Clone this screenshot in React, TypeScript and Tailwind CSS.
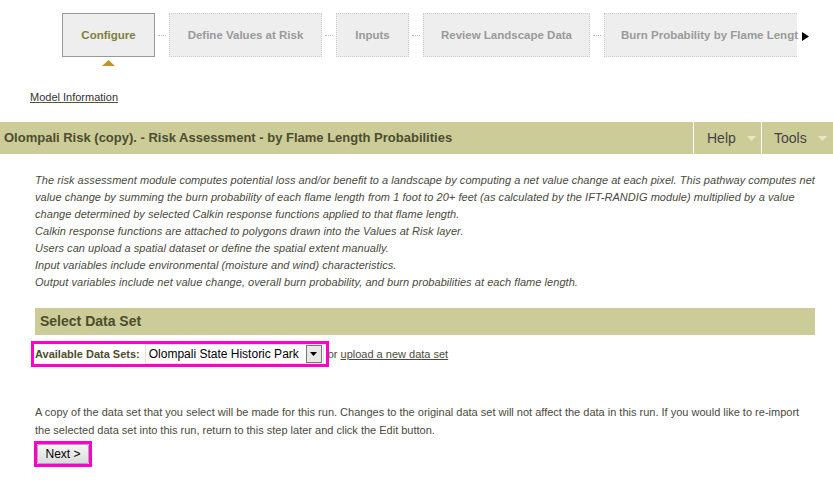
const steps = [
  { label: 'Define Values at Risk', w: 'w-[153px]' },
  { label: 'Inputs', w: 'w-[73px]' },
  { label: 'Review Landscape Data', w: 'w-[167px]' },
];

function Connector() {
  return <div className="w-[14px] flex justify-center"><div className="w-[8px] border-t border-dotted border-[#bbb]" /></div>;
}

export default function App() {
  return (
    <div className="w-[833px] h-[480px] overflow-hidden bg-white font-['Liberation_Sans',Arial,sans-serif] text-[11px] text-[#444]">
      {/* wizard steps */}
      <div className="flex items-center pl-[62px] pt-[13px]">
        <div className="w-[93px] h-[44px] pt-[2px] flex items-center justify-center border border-[#999] bg-[#eeeeee] font-bold text-[11.5px] text-[#7f7f3c]">
          Configure
        </div>
        {steps.map((s) => (
          <div key={s.label} className="flex items-center">
            <Connector />
            <div className={`${s.w} h-[44px] pt-[2px] flex items-center justify-center border border-dotted border-[#ccc] bg-[#eeeeee] font-bold text-[11.5px] text-[#9a9a9a] whitespace-nowrap`}>
              {s.label}
            </div>
          </div>
        ))}
        <Connector />
        <div className="w-[193px] h-[44px] pt-[2px] flex items-center pl-[16px] border border-dotted border-r-0 border-[#ccc] bg-[#eeeeee] font-bold text-[11.5px] text-[#9a9a9a] whitespace-nowrap">
          Burn Probability by Flame Lengt
        </div>
        <svg width="7" height="9" viewBox="0 0 7 9" className="ml-[5px] mt-[2px]">
          <path d="M0 0 L7 4.5 L0 9 Z" fill="#000" />
        </svg>
      </div>
      <div className="pl-[102px] mt-[3px]">
        <svg width="13" height="6" viewBox="0 0 13 6" className="block">
          <path d="M0 6 L6.5 0 L13 6 Z" fill="#c8922a" />
        </svg>
      </div>

      <div className="pl-[30px] mt-[25px] leading-[13px]">
        <a className="underline text-[#333] decoration-[#555533]">Model Information</a>
      </div>

      {/* title bar */}
      <div className="mt-[18px] h-[32px] bg-[#cccc99] flex items-stretch">
        <div className="flex-1 flex items-center pl-[4px] font-bold text-[13px] text-[#4d4d2e]">
          Olompali Risk (copy). - Risk Assessment - by Flame Length Probabilities
        </div>
        <div className="w-[68px] border-l border-white flex items-center pl-[13px] text-[14px] text-[#444]">
          Help
          <svg width="9" height="5" viewBox="0 0 9 5" className="ml-[11px]"><path d="M0 0 L9 0 L4.5 5 Z" fill="#e6e6c8" /></svg>
        </div>
        <div className="w-[72px] border-l border-white flex items-center pl-[12px] text-[14px] text-[#444]">
          Tools
          <svg width="9" height="5" viewBox="0 0 9 5" className="ml-[11px]"><path d="M0 0 L9 0 L4.5 5 Z" fill="#e6e6c8" /></svg>
        </div>
      </div>

      <div className="mt-[18px] pl-[35px] pr-[14px] italic leading-[17px] tracking-[0.05px] text-[#4a4a3c]">
        <p>
          The risk assessment module computes potential loss and/or benefit to a landscape by computing a net value change at each pixel. This pathway computes net
          value change by summing the burn probability of each flame length from 1 foot to 20+ feet (as calculated by the IFT-RANDIG module) multiplied by a value
          change determined by selected Calkin response functions applied to that flame length.
        </p>
        <p>Calkin response functions are attached to polygons drawn into the Values at Risk layer.</p>
        <p>Users can upload a spatial dataset or define the spatial extent manually.</p>
        <p>Input variables include environmental (moisture and wind) characteristics.</p>
        <p>Output variables include net value change, overall burn probability, and burn probabilities at each flame length.</p>
      </div>

      <div className="mt-[17px] ml-[35px] mr-[18px] h-[27px] bg-[#cccc99] flex items-center pl-[5px] font-bold text-[14px] text-[#4d4d2e]">
        Select Data Set
      </div>

      <div className="mt-[6px] flex items-center">
        <div className="ml-[31px] h-[26px] border-[3px] border-[#ff00cc] flex items-center pl-[1px] pr-[2px]">
          <span className="font-bold text-[#4d4d2e] mr-[5px]">Available Data Sets:</span>
          <div className="h-[20px] w-[179px] border border-[#e4e4e4] bg-white flex items-center justify-between pl-[3px] pr-[1px]">
            <span className="text-[12px] text-black whitespace-nowrap">Olompali State Historic Park</span>
            <div className="w-[16px] h-[18px] border border-[#777] bg-[#e8e8e8] flex items-center justify-center">
              <svg width="7" height="4" viewBox="0 0 7 4"><path d="M0 0 L7 0 L3.5 4 Z" fill="#000" /></svg>
            </div>
          </div>
        </div>
        <span className="ml-[-1px] text-[#4a4a3c]">or</span>
        <a className="ml-[3px] underline text-[#4a4a3c]">upload a new data set</a>
      </div>

      <p className="mt-[36px] pl-[35px] pr-[16px] leading-[18px] text-[#4a4a3c]">
        A copy of the data set that you select will be made for this run. Changes to the original data set will not affect the data in this run. If you would like to re-import
        the selected data set into this run, return to this step later and click the Edit button.
      </p>

      <div className="mt-[2px] ml-[34px] w-[58px] h-[26px] border-[3px] border-[#ff00cc] flex">
        <button className="flex-1 bg-gradient-to-b from-[#f6f6f6] to-[#dcdcdc] border border-[#aaa] rounded-[2px] text-[12px] text-black">
          Next &gt;
        </button>
      </div>
    </div>
  );
}
